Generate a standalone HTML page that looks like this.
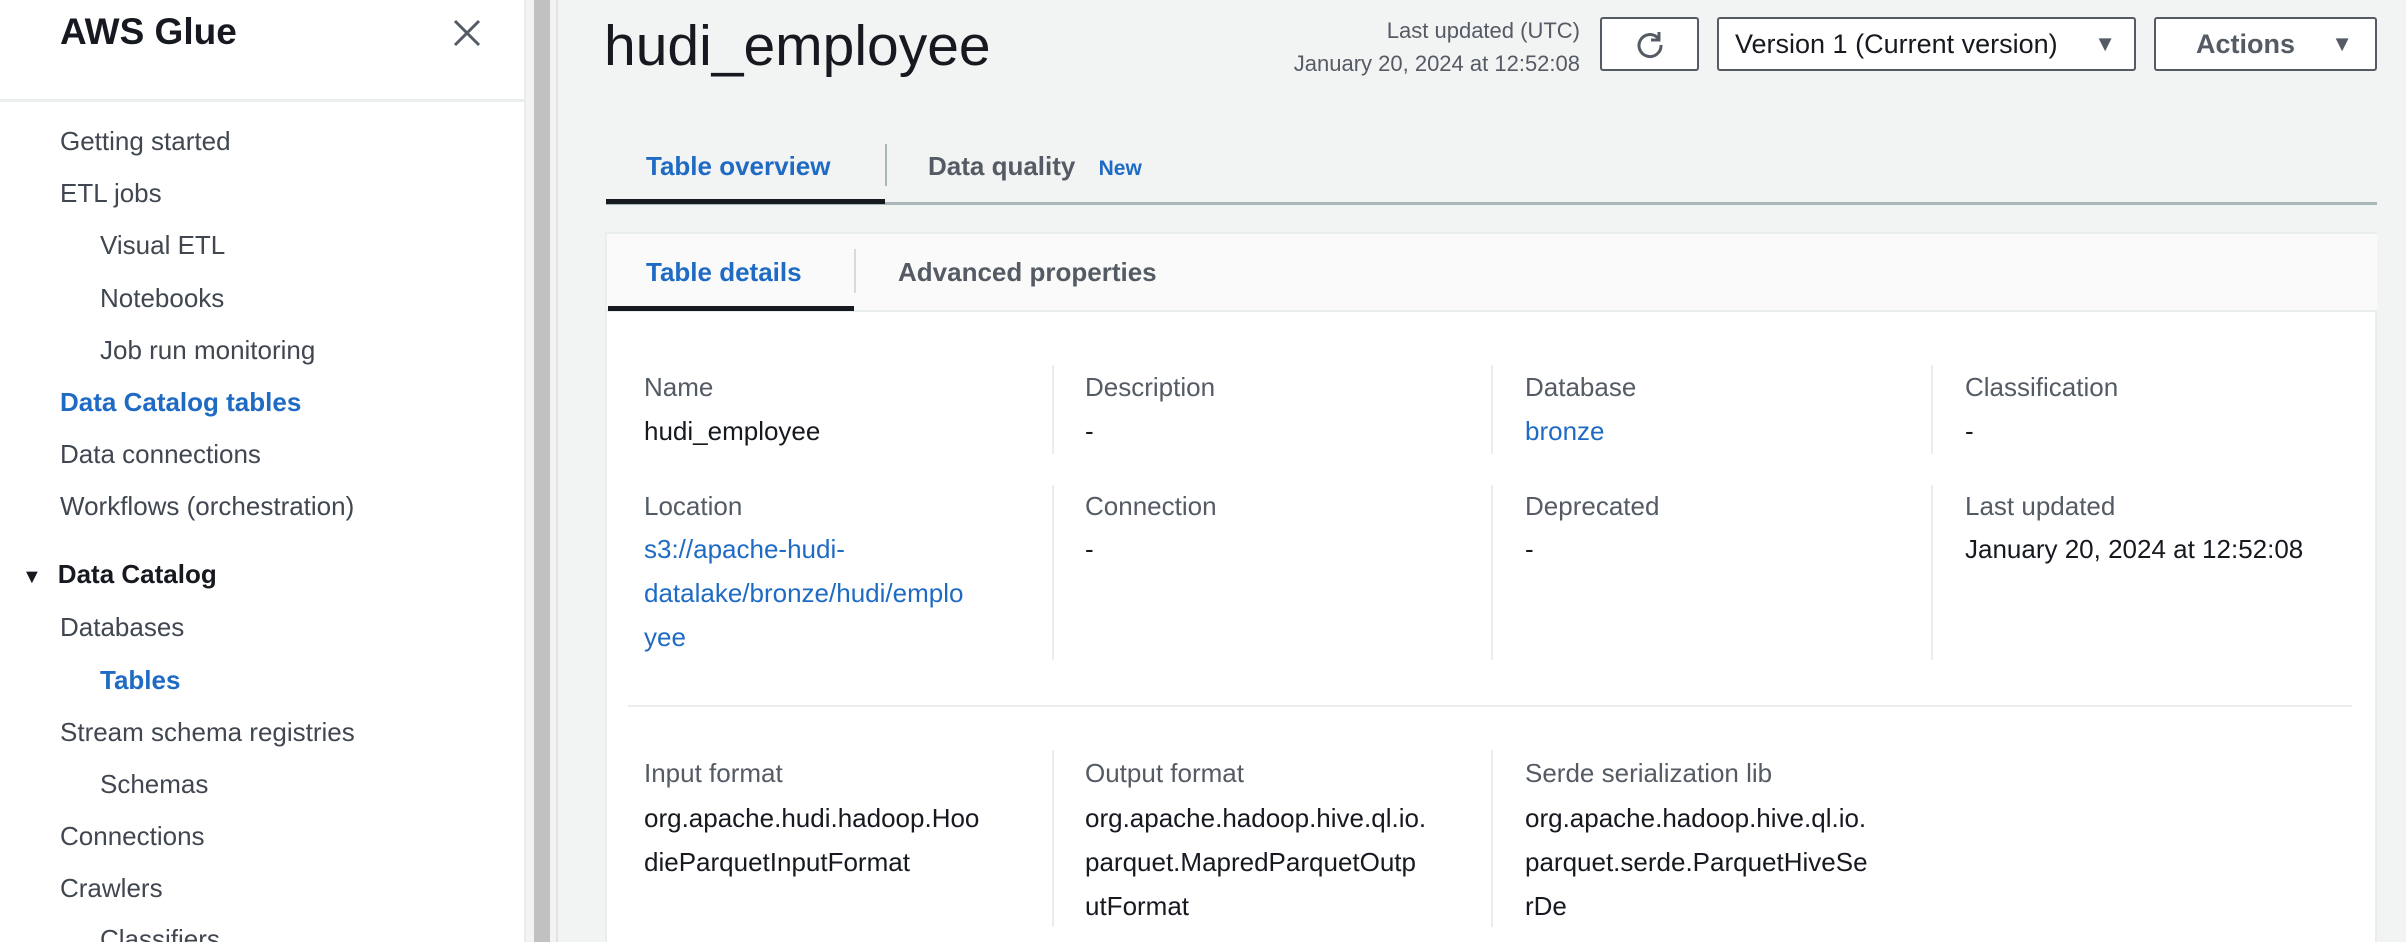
<!DOCTYPE html>
<html><head><meta charset="utf-8"><style>
*{margin:0;padding:0;box-sizing:border-box}
html{overflow:hidden;height:942px}
body{width:2406px;height:942px;overflow:hidden;background:#f2f3f3;font-family:"Liberation Sans",sans-serif;position:relative;color:#16191f}
.a{position:absolute;white-space:nowrap}
#side{position:absolute;left:0;top:0;width:526px;height:942px;background:#fff;border-right:2px solid #e9ebed;overflow:hidden}
.n{position:absolute;font-size:26px;line-height:44px;color:#414750;white-space:nowrap}
.lab{position:absolute;font-size:26px;line-height:44px;color:#545b64;white-space:nowrap}
.val{position:absolute;font-size:26px;line-height:44px;color:#16191f;white-space:nowrap}
.blue{color:#1f6bc4}
.vs{position:absolute;width:2px;background:#eaeded}
.btn{position:absolute;top:17px;height:54px;border:2px solid #545b64;border-radius:3px;background:#fff;font-size:27px;line-height:50px;color:#16191f}
</style></head><body>
<div id="side">
<div class="a" style="left:60px;top:10px;font-size:37px;font-weight:bold;line-height:44px">AWS Glue</div>
<svg class="a" style="left:452px;top:18px" width="30" height="30" viewBox="0 0 30 30"><path d="M3 3L27 27M27 3L3 27" stroke="#545b64" stroke-width="3"/></svg>
<div class="a" style="left:0;top:99px;width:526px;height:3px;background:#eaeded"></div>
<div class="n" style="left:60px;top:119px">Getting started</div>
<div class="n" style="left:60px;top:171px">ETL jobs</div>
<div class="n" style="left:100px;top:223px">Visual ETL</div>
<div class="n" style="left:100px;top:276px">Notebooks</div>
<div class="n" style="left:100px;top:328px">Job run monitoring</div>
<div class="n" style="left:60px;top:380px;color:#1f6bc4;font-weight:bold">Data Catalog tables</div>
<div class="n" style="left:60px;top:432px">Data connections</div>
<div class="n" style="left:60px;top:484px">Workflows (orchestration)</div>
<div class="n" style="left:22px;top:552px;color:#16191f;font-weight:bold"><span style="font-size:20px;margin-right:16px">▼</span>Data Catalog</div>
<div class="n" style="left:60px;top:605px">Databases</div>
<div class="n" style="left:100px;top:658px;color:#1f6bc4;font-weight:bold">Tables</div>
<div class="n" style="left:60px;top:710px">Stream schema registries</div>
<div class="n" style="left:100px;top:762px">Schemas</div>
<div class="n" style="left:60px;top:814px">Connections</div>
<div class="n" style="left:60px;top:866px">Crawlers</div>
<div class="n" style="left:100px;top:917px">Classifiers</div>
</div>
<div class="a" style="left:534px;top:0;width:16px;height:942px;background:#c1c1c1"></div>
<div class="a" style="left:556px;top:0;width:2px;height:942px;background:#e3e3e3"></div>

<div class="a" style="left:604px;top:12px;font-size:57px;line-height:68px;color:#16191f">hudi_employee</div>
<div class="a" style="right:826px;top:16px;font-size:22px;line-height:30px;color:#545b64;text-align:right">Last updated (UTC)</div>
<div class="a" style="right:826px;top:49px;font-size:22px;line-height:30px;color:#545b64;text-align:right">January 20, 2024 at 12:52:08</div>
<div class="btn" style="left:1600px;width:99px"><svg style="position:absolute;left:33px;top:11px" width="30" height="30" viewBox="0 0 30 30"><path d="M23 8A11 11 0 1 0 26 15" fill="none" stroke="#545b64" stroke-width="3"/><path d="M24 2V10H16" fill="none" stroke="#545b64" stroke-width="3"/></svg></div>
<div class="btn" style="left:1717px;width:419px;padding-left:16px">Version 1 (Current version)<span style="position:absolute;right:18px;font-size:22px;color:#545b64">▼</span></div>
<div class="btn" style="left:2154px;width:223px;padding-left:40px;font-weight:bold;color:#545b64">Actions<span style="position:absolute;right:22px;font-size:22px">▼</span></div>

<div class="a" style="left:646px;top:144px;font-size:26px;line-height:44px;font-weight:bold;color:#1f6bc4">Table overview</div>
<div class="a" style="left:885px;top:144px;width:2px;height:42px;background:#aab7b8"></div>
<div class="a" style="left:928px;top:144px;font-size:26px;line-height:44px;font-weight:bold;color:#545b64">Data quality <span style="font-size:21px;color:#1f6bc4;margin-left:16px">New</span></div>
<div class="a" style="left:606px;top:202px;width:1771px;height:3px;background:#aab7b8"></div>
<div class="a" style="left:606px;top:199px;width:279px;height:5px;background:#16191f"></div>

<div class="a" style="left:605px;top:232px;width:1772px;height:710px;background:#fff;border:2px solid #eaeded;border-bottom:none"></div>
<div class="a" style="left:607px;top:234px;width:1770px;height:78px;background:#fafafa;border-bottom:2px solid #eaeded"></div>
<div class="a" style="left:646px;top:250px;font-size:26px;line-height:44px;font-weight:bold;color:#1f6bc4">Table details</div>
<div class="a" style="left:854px;top:249px;width:2px;height:44px;background:#d5dbdb"></div>
<div class="a" style="left:898px;top:250px;font-size:26px;line-height:44px;font-weight:bold;color:#545b64">Advanced properties</div>
<div class="a" style="left:608px;top:306px;width:246px;height:5px;background:#16191f"></div>

<div class="vs" style="left:1052px;top:365px;height:89px"></div>
<div class="vs" style="left:1491px;top:365px;height:89px"></div>
<div class="vs" style="left:1931px;top:365px;height:89px"></div>
<div class="vs" style="left:1052px;top:485px;height:175px"></div>
<div class="vs" style="left:1491px;top:485px;height:175px"></div>
<div class="vs" style="left:1931px;top:485px;height:175px"></div>
<div class="vs" style="left:1052px;top:750px;height:177px"></div>
<div class="vs" style="left:1491px;top:750px;height:177px"></div>
<div class="a" style="left:628px;top:705px;width:1724px;height:2px;background:#eaeded"></div>

<div class="lab" style="left:644px;top:365px">Name</div>
<div class="val" style="left:644px;top:409px">hudi_employee</div>
<div class="lab" style="left:1085px;top:365px">Description</div>
<div class="val" style="left:1085px;top:409px">-</div>
<div class="lab" style="left:1525px;top:365px">Database</div>
<div class="val blue" style="left:1525px;top:409px">bronze</div>
<div class="lab" style="left:1965px;top:365px">Classification</div>
<div class="val" style="left:1965px;top:409px">-</div>

<div class="lab" style="left:644px;top:484px">Location</div>
<div class="val blue" style="left:644px;top:527px">s3://apache-hudi-<br>datalake/bronze/hudi/emplo<br>yee</div>
<div class="lab" style="left:1085px;top:484px">Connection</div>
<div class="val" style="left:1085px;top:527px">-</div>
<div class="lab" style="left:1525px;top:484px">Deprecated</div>
<div class="val" style="left:1525px;top:527px">-</div>
<div class="lab" style="left:1965px;top:484px">Last updated</div>
<div class="val" style="left:1965px;top:527px">January 20, 2024 at 12:52:08</div>

<div class="lab" style="left:644px;top:751px">Input format</div>
<div class="val" style="left:644px;top:796px">org.apache.hudi.hadoop.Hoo<br>dieParquetInputFormat</div>
<div class="lab" style="left:1085px;top:751px">Output format</div>
<div class="val" style="left:1085px;top:796px">org.apache.hadoop.hive.ql.io.<br>parquet.MapredParquetOutp<br>utFormat</div>
<div class="lab" style="left:1525px;top:751px">Serde serialization lib</div>
<div class="val" style="left:1525px;top:796px">org.apache.hadoop.hive.ql.io.<br>parquet.serde.ParquetHiveSe<br>rDe</div>
</body></html>
